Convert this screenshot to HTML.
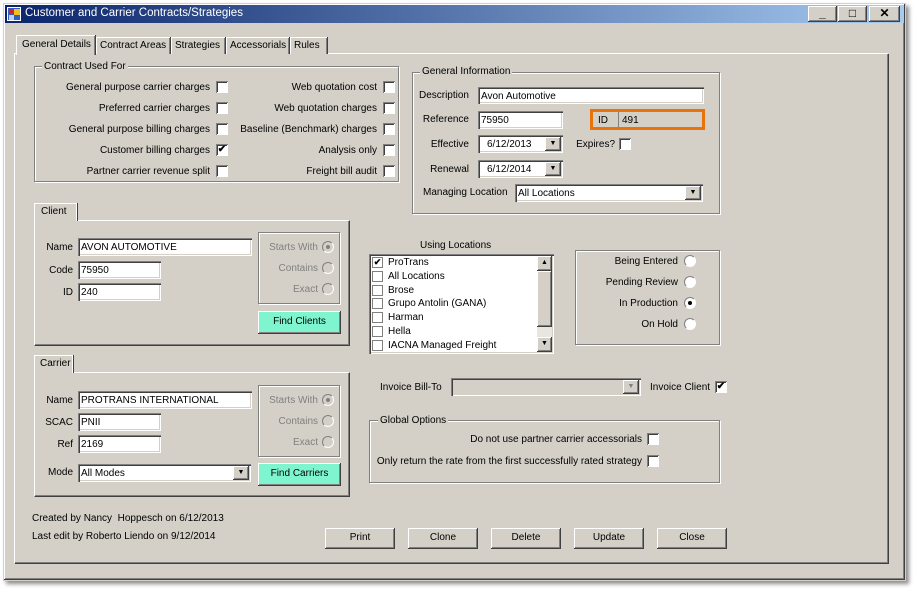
<!DOCTYPE html>
<html><head><style>
*{box-sizing:border-box;margin:0;padding:0;white-space:nowrap}
body{width:919px;height:595px;background:#fff;position:relative;overflow:hidden;font-family:"Liberation Sans",sans-serif;font-size:10px;color:#000}
.a{position:absolute}
.win{left:3px;top:3px;width:903px;height:578px;background:#d4d0c8;border:1px solid #d4d0c8;box-shadow:inset -1px -1px 0 #404040,inset 1px 1px 0 #fff,inset -2px -2px 0 #808080,3px 3px 4px rgba(0,0,0,.45)}
.title{left:5px;top:5px;width:899px;height:18px;background:linear-gradient(to right,#0a246a,#a6caf0)}
.tb{top:6px;width:29px;height:16px;background:#d4d0c8;box-shadow:inset -1px -1px 0 #404040,inset 1px 1px 0 #fff,inset -2px -2px 0 #808080;text-align:center;font-weight:bold;font-size:12px;line-height:15px}
.raised{box-shadow:inset -1px -1px 0 #404040,inset 1px 1px 0 #fff,inset -2px -2px 0 #808080}
.grp{border:1px solid #808080;box-shadow:1px 1px 0 #fff,inset 1px 1px 0 #fff}
.gl{background:#d4d0c8;padding:0 2px;line-height:12px}
.inp{background:#fff;box-shadow:inset 1px 1px 0 #808080,inset 2px 2px 0 #404040,inset -1px -1px 0 #fff,inset -2px -2px 0 #d4d0c8;padding:3px 0 0 3px;line-height:13px}
.cb{width:12px;height:12px;background:#fff;box-shadow:inset 1px 1px 0 #808080,inset -1px -1px 0 #fff,inset 2px 2px 0 #404040;font-size:10px;line-height:12px;text-align:center;font-weight:bold}
.lc{position:absolute;left:0;top:1px;width:11px;height:11px;border:1px solid #808080;background:#fff;font-size:9px;line-height:9px;text-align:center;font-weight:bold}
.rb{width:12px;height:12px;border-radius:50%;background:#fff;border:1px solid #808080;border-right-color:#fff;border-bottom-color:#fff}
.rb.on::after{content:"";position:absolute;left:3px;top:3px;width:4px;height:4px;border-radius:50%;background:#000}
.rb.dis{background:#d4d0c8}
.rb.dis.on::after{background:#808080}
.lr{text-align:right;line-height:13px}
.btn{width:70px;height:21px;background:#d4d0c8;text-align:center;line-height:20px}
.dd{width:16px;height:14px;background:#d4d0c8;box-shadow:inset -1px -1px 0 #404040,inset 1px 1px 0 #fff,inset -2px -2px 0 #808080;font-size:7px;text-align:center;line-height:14px}
.tab{top:37px;height:17px;background:#d4d0c8;border-top:1px solid #fff;border-left:1px solid #fff;box-shadow:inset -1px 0 0 #808080,1px 0 0 #404040;line-height:15px;padding-left:3px}
.gray{color:#808080}
</style></head><body>
<div class="a win"></div>
<div class="a title"></div>
<div class="a" style="left:7px;top:7px;width:14px;height:14px;background:#3060c0;border:1px solid #fff"><div class="a" style="left:1px;top:1px;width:5px;height:5px;background:#e02020"></div><div class="a" style="left:6px;top:1px;width:6px;height:6px;background:#f0c020"></div><div class="a" style="left:1px;top:7px;width:5px;height:5px;background:#c0d0f0"></div></div>
<div class="a" style="left:25px;top:6px;color:#fff;font-size:11.5px;line-height:15px">Customer and Carrier Contracts/Strategies</div>
<div class="a tb" style="left:808px">_</div>
<div class="a tb" style="left:838px;font-weight:normal">□</div>
<div class="a tb" style="left:869px;width:31px">✕</div>

<div class="a" style="left:14px;top:53px;width:874px;height:510px;border-left:1px solid #fff;border-top:1px solid #fff;box-shadow:inset -1px -1px 0 #808080,1px 1px 0 #404040"></div>
<div class="a tab" style="left:96px;width:74px">Contract Areas</div>
<div class="a tab" style="left:171px;width:54px">Strategies</div>
<div class="a tab" style="left:226px;width:63px">Accessorials</div>
<div class="a tab" style="left:290px;width:37px">Rules</div>
<div class="a tab" style="left:16px;top:35px;width:79px;height:20px;padding-left:5px;line-height:17px">General Details</div>

<div class="a grp" style="left:34px;top:66px;width:365px;height:116px"></div>
<div class="a gl" style="left:42px;top:61px">Contract Used For</div>
<div class="a lr" style="right:709px;top:81px">General purpose carrier charges</div>
<div class="a lr" style="right:709px;top:102px">Preferred carrier charges</div>
<div class="a lr" style="right:709px;top:123px">General purpose billing charges</div>
<div class="a lr" style="right:709px;top:144px">Customer billing charges</div>
<div class="a lr" style="right:709px;top:165px">Partner carrier revenue split</div>
<div class="a cb" style="left:216px;top:81px"></div>
<div class="a cb" style="left:216px;top:102px"></div>
<div class="a cb" style="left:216px;top:123px"></div>
<div class="a cb" style="left:216px;top:144px">✔</div>
<div class="a cb" style="left:216px;top:165px"></div>
<div class="a lr" style="right:542px;top:81px">Web quotation cost</div>
<div class="a lr" style="right:542px;top:102px">Web quotation charges</div>
<div class="a lr" style="right:542px;top:123px">Baseline (Benchmark) charges</div>
<div class="a lr" style="right:542px;top:144px">Analysis only</div>
<div class="a lr" style="right:542px;top:165px">Freight bill audit</div>
<div class="a cb" style="left:383px;top:81px"></div>
<div class="a cb" style="left:383px;top:102px"></div>
<div class="a cb" style="left:383px;top:123px"></div>
<div class="a cb" style="left:383px;top:144px"></div>
<div class="a cb" style="left:383px;top:165px"></div>

<div class="a grp" style="left:412px;top:72px;width:308px;height:142px"></div>
<div class="a gl" style="left:420px;top:66px">General Information</div>
<div class="a lr" style="right:450px;top:89px">Description</div>
<div class="a inp" style="left:478px;top:87px;width:226px;height:17px">Avon Automotive</div>
<div class="a lr" style="right:450px;top:113px">Reference</div>
<div class="a inp" style="left:478px;top:111px;width:85px;height:18px">75950</div>
<div class="a" style="left:590px;top:109px;width:115px;height:21px;border:3px solid #e8720c;background:#d4d0c8"><div class="a" style="left:5px;top:2px;line-height:13px">ID</div><div class="a" style="left:25px;top:0;width:1px;height:15px;background:#808080"></div><div class="a" style="left:29px;top:2px;line-height:13px">491</div></div>
<div class="a lr" style="right:450px;top:138px">Effective</div>
<div class="a inp" style="left:478px;top:135px;width:85px;height:18px;padding-left:9px">6/12/2013</div>
<div class="a dd" style="left:545px;top:137px">▼</div>
<div class="a lr" style="right:304px;top:138px">Expires?</div>
<div class="a cb" style="left:619px;top:138px"></div>
<div class="a lr" style="right:450px;top:163px">Renewal</div>
<div class="a inp" style="left:478px;top:160px;width:85px;height:18px;padding-left:9px">6/12/2014</div>
<div class="a dd" style="left:545px;top:162px">▼</div>
<div class="a" style="left:423px;top:186px;line-height:13px">Managing Location</div>
<div class="a inp" style="left:515px;top:184px;width:188px;height:18px">All Locations</div>
<div class="a dd" style="left:685px;top:186px">▼</div>

<div class="a" style="left:34px;top:220px;width:316px;height:126px;border:1px solid #fff;border-right-color:#404040;border-bottom-color:#404040;box-shadow:inset -1px -1px 0 #808080"></div>
<div class="a" style="left:34px;top:203px;width:43px;height:18px;background:#d4d0c8;border:1px solid #fff;border-bottom:none;box-shadow:1px 0 0 #404040;padding-left:6px;line-height:15px">Client</div>
<div class="a lr" style="right:846px;top:241px">Name</div>
<div class="a inp" style="left:78px;top:238px;width:174px;height:18px">AVON AUTOMOTIVE</div>
<div class="a lr" style="right:846px;top:264px">Code</div>
<div class="a inp" style="left:78px;top:261px;width:83px;height:18px">75950</div>
<div class="a lr" style="right:846px;top:286px">ID</div>
<div class="a inp" style="left:78px;top:283px;width:83px;height:18px">240</div>
<div class="a grp" style="left:258px;top:232px;width:82px;height:72px"></div>
<div class="a lr gray" style="right:601px;top:241px">Starts With</div>
<div class="a lr gray" style="right:601px;top:262px">Contains</div>
<div class="a lr gray" style="right:601px;top:283px">Exact</div>
<div class="a rb dis on" style="left:322px;top:241px"></div>
<div class="a rb dis" style="left:322px;top:262px"></div>
<div class="a rb dis" style="left:322px;top:283px"></div>
<div class="a btn raised" style="left:258px;top:311px;width:83px;height:23px;background:#7ff5cf;line-height:22px">Find Clients</div>

<div class="a" style="left:34px;top:372px;width:316px;height:125px;border:1px solid #fff;border-right-color:#404040;border-bottom-color:#404040;box-shadow:inset -1px -1px 0 #808080"></div>
<div class="a" style="left:34px;top:355px;width:39px;height:18px;background:#d4d0c8;border:1px solid #fff;border-bottom:none;box-shadow:1px 0 0 #404040;padding-left:5px;line-height:15px">Carrier</div>
<div class="a lr" style="right:846px;top:394px">Name</div>
<div class="a inp" style="left:78px;top:391px;width:174px;height:18px">PROTRANS INTERNATIONAL</div>
<div class="a lr" style="right:846px;top:416px">SCAC</div>
<div class="a inp" style="left:78px;top:413px;width:83px;height:18px">PNII</div>
<div class="a lr" style="right:846px;top:438px">Ref</div>
<div class="a inp" style="left:78px;top:435px;width:83px;height:18px">2169</div>
<div class="a lr" style="right:846px;top:466px">Mode</div>
<div class="a inp" style="left:78px;top:464px;width:173px;height:18px">All Modes</div>
<div class="a dd" style="left:233px;top:466px">▼</div>
<div class="a grp" style="left:258px;top:385px;width:82px;height:72px"></div>
<div class="a lr gray" style="right:601px;top:394px">Starts With</div>
<div class="a lr gray" style="right:601px;top:415px">Contains</div>
<div class="a lr gray" style="right:601px;top:436px">Exact</div>
<div class="a rb dis on" style="left:322px;top:394px"></div>
<div class="a rb dis" style="left:322px;top:415px"></div>
<div class="a rb dis" style="left:322px;top:436px"></div>
<div class="a btn raised" style="left:258px;top:463px;width:83px;height:23px;background:#7ff5cf;line-height:22px">Find Carriers</div>

<div class="a" style="left:32px;top:512px;line-height:13px">Created by Nancy&nbsp; Hoppesch on 6/12/2013</div>
<div class="a" style="left:32px;top:530px;line-height:13px">Last edit by Roberto Liendo on 9/12/2014</div>

<div class="a" style="left:420px;top:239px;line-height:13px">Using Locations</div>
<div class="a inp" style="left:369px;top:254px;width:185px;height:100px;padding:0"></div>
<div class="a" style="left:372px;top:256px;line-height:13.8px">
<div style="position:relative;padding-left:16px"><span class="lc">✔</span>ProTrans</div>
<div style="position:relative;padding-left:16px"><span class="lc"></span>All Locations</div>
<div style="position:relative;padding-left:16px"><span class="lc"></span>Brose</div>
<div style="position:relative;padding-left:16px"><span class="lc"></span>Grupo Antolin (GANA)</div>
<div style="position:relative;padding-left:16px"><span class="lc"></span>Harman</div>
<div style="position:relative;padding-left:16px"><span class="lc"></span>Hella</div>
<div style="position:relative;padding-left:16px"><span class="lc"></span>IACNA Managed Freight</div>
</div>
<div class="a" style="left:537px;top:256px;width:15px;height:96px;background:#e8e6e0"></div>
<div class="a dd" style="left:537px;top:256px;width:15px;height:15px">▲</div>
<div class="a raised" style="left:537px;top:271px;width:15px;height:56px;background:#d4d0c8"></div>
<div class="a dd" style="left:537px;top:337px;width:15px;height:15px">▼</div>

<div class="a grp" style="left:575px;top:250px;width:145px;height:95px"></div>
<div class="a lr" style="right:241px;top:255px">Being Entered</div>
<div class="a lr" style="right:241px;top:276px">Pending Review</div>
<div class="a lr" style="right:241px;top:297px">In Production</div>
<div class="a lr" style="right:241px;top:318px">On Hold</div>
<div class="a rb" style="left:684px;top:255px"></div>
<div class="a rb" style="left:684px;top:276px"></div>
<div class="a rb on" style="left:684px;top:297px"></div>
<div class="a rb" style="left:684px;top:318px"></div>

<div class="a" style="left:380px;top:381px;line-height:13px">Invoice Bill-To</div>
<div class="a inp" style="left:451px;top:378px;width:190px;height:18px;background:#d4d0c8"></div>
<div class="a dd" style="left:623px;top:380px;color:#808080">▼</div>
<div class="a" style="left:650px;top:381px;line-height:13px">Invoice Client</div>
<div class="a cb" style="left:715px;top:381px">✔</div>

<div class="a grp" style="left:369px;top:420px;width:351px;height:63px"></div>
<div class="a gl" style="left:378px;top:415px">Global Options</div>
<div class="a lr" style="right:277px;top:433px">Do not use partner carrier accessorials</div>
<div class="a lr" style="right:277px;top:455px">Only return the rate from the first successfully rated strategy</div>
<div class="a cb" style="left:647px;top:433px"></div>
<div class="a cb" style="left:647px;top:455px"></div>

<div class="a btn raised" style="left:325px;top:528px">Print</div>
<div class="a btn raised" style="left:408px;top:528px">Clone</div>
<div class="a btn raised" style="left:491px;top:528px">Delete</div>
<div class="a btn raised" style="left:574px;top:528px">Update</div>
<div class="a btn raised" style="left:657px;top:528px">Close</div>
</body></html>
